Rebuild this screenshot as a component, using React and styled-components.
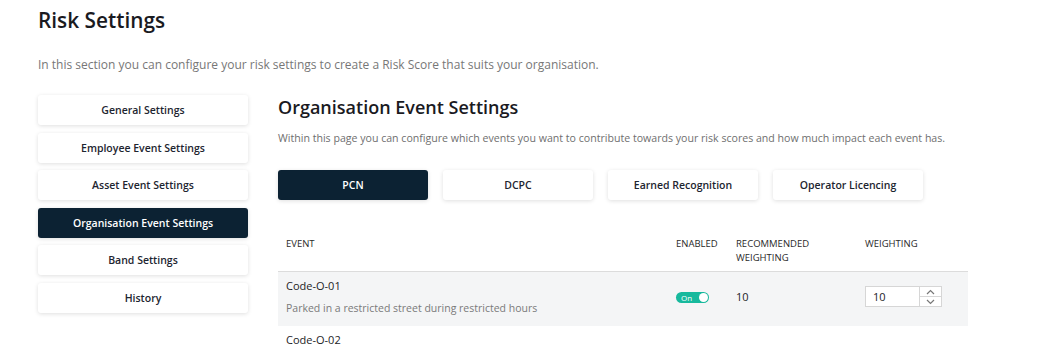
import React, { useState } from 'react';
import styled, { createGlobalStyle } from 'styled-components';

const GlobalStyle = createGlobalStyle`
  body {
    margin: 0;
    background: #ffffff;
    font-family: 'Open Sans', 'Noto Sans', sans-serif;
    color: #1d1d1f;
  }
`;

const navItems = [
  'General Settings',
  'Employee Event Settings',
  'Asset Event Settings',
  'Organisation Event Settings',
  'Band Settings',
  'History',
];

const tabs = ['PCN', 'DCPC', 'Earned Recognition', 'Operator Licencing'];

const events = [
  {
    code: 'Code-O-01',
    desc: 'Parked in a restricted street during restricted hours',
    enabled: true,
    recommended: 10,
    weighting: 10,
  },
  {
    code: 'Code-O-02',
    desc: 'Parked or loading/unloading in a restricted street where waiting and loading/unloading restrictions are in force',
    enabled: true,
    recommended: 10,
    weighting: 10,
  },
];

const App = () => {
  const [activeTab, setActiveTab] = useState('PCN');
  const [active, setActive] = useState('Organisation Event Settings');

  return (
    <Page>
      <GlobalStyle />
      <PageTitle>Risk Settings</PageTitle>
      <PageIntro>
        In this section you can configure your risk settings to create a Risk Score that suits your organisation.
      </PageIntro>
      <Layout>
        <SideNav>
          {navItems.map((item) => (
            <NavButton key={item} $active={item === active} onClick={() => setActive(item)}>
              {item}
            </NavButton>
          ))}
        </SideNav>
        <Content>
          <SectionTitle>Organisation Event Settings</SectionTitle>
          <SectionIntro>
            Within this page you can configure which events you want to contribute towards your risk scores and how much impact each event has.
          </SectionIntro>
          <TabRow>
            {tabs.map((tab) => (
              <TabButton key={tab} $active={tab === activeTab} onClick={() => setActiveTab(tab)}>
                {tab}
              </TabButton>
            ))}
          </TabRow>
          <Table>
            <HeaderRow>
              <HeadCell>Event</HeadCell>
              <HeadCell>Enabled</HeadCell>
              <HeadCell>Recommended<br />Weighting</HeadCell>
              <HeadCell>Weighting</HeadCell>
            </HeaderRow>
            {events.map((ev, i) => (
              <Row key={ev.code} $shaded={i % 2 === 0}>
                <EventCell>
                  <EventCode>{ev.code}</EventCode>
                  <EventDesc>{ev.desc}</EventDesc>
                </EventCell>
                <Cell>
                  <Toggle $on={ev.enabled}>
                    <ToggleLabel>On</ToggleLabel>
                    <ToggleKnob />
                  </Toggle>
                </Cell>
                <Cell>{ev.recommended}</Cell>
                <Cell>
                  <NumberBox>
                    <NumberValue>{ev.weighting}</NumberValue>
                    <Spinner>
                      <SpinBtn>
                        <svg width="9" height="6" viewBox="0 0 9 6">
                          <path d="M1 5 L4.5 1.5 L8 5" fill="none" stroke="#777" strokeWidth="1.2" />
                        </svg>
                      </SpinBtn>
                      <SpinBtn>
                        <svg width="9" height="6" viewBox="0 0 9 6">
                          <path d="M1 1 L4.5 4.5 L8 1" fill="none" stroke="#777" strokeWidth="1.2" />
                        </svg>
                      </SpinBtn>
                    </Spinner>
                  </NumberBox>
                </Cell>
              </Row>
            ))}
          </Table>
        </Content>
      </Layout>
    </Page>
  );
};

const Page = styled.div`
  padding: 6px 0 0 38px;
  height: 346px;
  box-sizing: border-box;
  overflow: hidden;
`;

const PageTitle = styled.h1`
  margin: 0;
  font-size: 20.8px;
  font-weight: 600;
  line-height: 28px;
  color: #1a1a1f;
`;

const PageIntro = styled.p`
  margin: 22px 0 0;
  font-size: 12px;
  line-height: 18px;
  color: #777777;
`;

const Layout = styled.div`
  display: flex;
  gap: 30px;
  margin-top: 21px;
`;

const SideNav = styled.nav`
  display: flex;
  flex-direction: column;
  gap: 7.6px;
  width: 210px;
  flex-shrink: 0;
`;

const NavButton = styled.button`
  height: 30px;
  border: none;
  border-radius: 3px;
  font-family: inherit;
  font-size: 10.5px;
  font-weight: 600;
  cursor: pointer;
  background: ${(p) => (p.$active ? '#0c2233' : '#ffffff')};
  color: ${(p) => (p.$active ? '#ffffff' : '#1d2530')};
  box-shadow: 0 1px 4px rgba(0, 0, 0, 0.13);
`;

const Content = styled.div`
  width: 690px;
`;

const SectionTitle = styled.h2`
  margin: 0;
  font-size: 18px;
  font-weight: 600;
  line-height: 24px;
  color: #1a1a1f;
`;

const SectionIntro = styled.p`
  margin: 11px 0 0;
  font-size: 10.6px;
  line-height: 16px;
  color: #6f6f6f;
  white-space: nowrap;
`;

const TabRow = styled.div`
  display: flex;
  gap: 15px;
  margin-top: 24px;
`;

const TabButton = styled.button`
  width: 150px;
  height: 30px;
  border: none;
  border-radius: 3px;
  font-family: inherit;
  font-size: 10.5px;
  font-weight: 600;
  cursor: pointer;
  background: ${(p) => (p.$active ? '#0c2233' : '#ffffff')};
  color: ${(p) => (p.$active ? '#ffffff' : '#1d2530')};
  box-shadow: 0 1px 4px rgba(0, 0, 0, 0.13);
`;

const Table = styled.div`
  margin-top: 37px;
`;

const gridCols = `
  display: grid;
  grid-template-columns: 390px 60px 129px 1fr;
`;

const HeaderRow = styled.div`
  ${gridCols}
  padding: 0 0 0 8px;
  height: 35px;
  border-bottom: 1px solid #dcdcdc;
  box-sizing: border-box;
`;

const HeadCell = styled.div`
  font-size: 9.5px;
  font-weight: 500;
  line-height: 14px;
  text-transform: uppercase;
  color: #2a2a2a;
`;

const Row = styled.div`
  ${gridCols}
  align-items: center;
  padding: 6px 0 11px 8px;
  background: ${(p) => (p.$shaded ? '#f4f5f6' : '#ffffff')};
`;

const EventCell = styled.div`
  display: flex;
  flex-direction: column;
  gap: 7px;
  padding-right: 20px;
`;

const EventCode = styled.div`
  font-size: 11px;
  line-height: 16px;
  color: #1d1d1f;
`;

const EventDesc = styled.div`
  font-size: 10.5px;
  line-height: 14px;
  color: #7a7a7a;
`;

const Cell = styled.div`
  font-size: 11px;
  color: #1d1d1f;
`;

const Toggle = styled.div`
  display: inline-flex;
  align-items: center;
  justify-content: space-between;
  width: 33px;
  height: 11px;
  border-radius: 6px;
  padding: 0 1px 0 5px;
  box-sizing: border-box;
  background: ${(p) => (p.$on ? '#17b99d' : '#c4c4c4')};
`;

const ToggleLabel = styled.span`
  font-size: 8px;
  line-height: 11px;
  color: #ffffff;
`;

const ToggleKnob = styled.span`
  width: 9px;
  height: 9px;
  border-radius: 50%;
  background: #ffffff;
`;

const NumberBox = styled.div`
  display: flex;
  width: 77px;
  height: 21px;
  border: 1px solid #d6d6d6;
  background: #ffffff;
  box-sizing: border-box;
`;

const NumberValue = styled.div`
  flex: 1;
  padding-left: 7px;
  font-size: 11px;
  line-height: 19px;
  color: #1d1d1f;
`;

const Spinner = styled.div`
  display: flex;
  flex-direction: column;
  width: 21px;
  border-left: 1px solid #d6d6d6;
`;

const SpinBtn = styled.div`
  flex: 1;
  display: flex;
  align-items: center;
  justify-content: center;
  & + & {
    border-top: 1px solid #d6d6d6;
  }
`;

export default App;
